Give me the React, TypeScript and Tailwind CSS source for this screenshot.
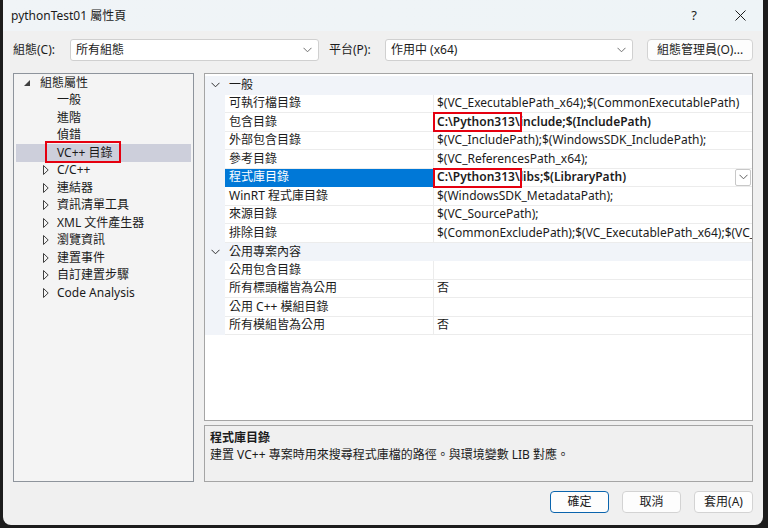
import { type ReactNode } from "react";

const FONT = "font-['Noto_Sans','Noto_Sans_CJK_TC',sans-serif]";

interface TreeItem {
  label: string;
  level: 0 | 1;
  kind: "expanded" | "collapsed" | "leaf";
  selected?: boolean;
}

const treeItems: TreeItem[] = [
  { label: "組態屬性", level: 0, kind: "expanded" },
  { label: "一般", level: 1, kind: "leaf" },
  { label: "進階", level: 1, kind: "leaf" },
  { label: "偵錯", level: 1, kind: "leaf" },
  { label: "VC++ 目錄", level: 1, kind: "leaf", selected: true },
  { label: "C/C++", level: 1, kind: "collapsed" },
  { label: "連結器", level: 1, kind: "collapsed" },
  { label: "資訊清單工具", level: 1, kind: "collapsed" },
  { label: "XML 文件產生器", level: 1, kind: "collapsed" },
  { label: "瀏覽資訊", level: 1, kind: "collapsed" },
  { label: "建置事件", level: 1, kind: "collapsed" },
  { label: "自訂建置步驟", level: 1, kind: "collapsed" },
  { label: "Code Analysis", level: 1, kind: "collapsed" }
];

interface GridRow {
  name?: string;
  value?: string;
  header?: string;
  bold?: boolean;
  marked?: boolean;
  selected?: boolean;
}

const gridRows: GridRow[] = [
  { header: "一般" },
  { name: "可執行檔目錄", value: "$(VC_ExecutablePath_x64);$(CommonExecutablePath)" },
  { name: "包含目錄", value: "C:\\Python313\\include;$(IncludePath)", bold: true, marked: true },
  { name: "外部包含目錄", value: "$(VC_IncludePath);$(WindowsSDK_IncludePath);" },
  { name: "參考目錄", value: "$(VC_ReferencesPath_x64);" },
  { name: "程式庫目錄", value: "C:\\Python313\\libs;$(LibraryPath)", bold: true, marked: true, selected: true },
  { name: "WinRT 程式庫目錄", value: "$(WindowsSDK_MetadataPath);" },
  { name: "來源目錄", value: "$(VC_SourcePath);" },
  { name: "排除目錄", value: "$(CommonExcludePath);$(VC_ExecutablePath_x64);$(VC_LibraryPath_x64)" },
  { header: "公用專案內容" },
  { name: "公用包含目錄", value: "" },
  { name: "所有標頭檔皆為公用", value: "否" },
  { name: "公用 C++ 模組目錄", value: "" },
  { name: "所有模組皆為公用", value: "否" }
];

function Chevron({ className }: { className?: string }) {
  return (
    <svg width="9" height="6" viewBox="0 0 9 6" className={className}>
      <path d="M0.5 0.8 L4.5 4.8 L8.5 0.8" fill="none" stroke="currentColor" strokeWidth="1" />
    </svg>
  );
}

function ComboBox({ text, width }: { text: string; width: string }) {
  return (
    <div className={`${width} h-[22px] shrink-0 flex items-center justify-between bg-white border border-[#d0d0d0] rounded-[3px] pl-[5px] pr-[6px]`}>
      <span>{text}</span>
      <Chevron className="text-[#707070]" />
    </div>
  );
}

function Button({ children, primary }: { children: ReactNode; primary?: boolean }) {
  return (
    <div className={`w-[59px] h-[22px] flex items-center justify-center rounded-[4px] bg-[#fdfdfd] border ${primary ? "border-[#0a64ad]" : "border-[#d3d3d3]"}`}>
      {children}
    </div>
  );
}

function TreeRow({ item }: { item: TreeItem }) {
  return (
    <div className={`relative h-[17.5px] flex items-center whitespace-nowrap ${item.selected ? "bg-[#cdcfdb]" : ""}`}>
      {item.level === 0 ? (
        <>
          <div className="w-[7px] shrink-0" />
          <svg width="8" height="8" viewBox="0 0 8 8" className="shrink-0">
            <polygon points="7,1 7,7 1,7" fill="#404040" />
          </svg>
          <span className="ml-[9px]">{item.label}</span>
        </>
      ) : (
        <>
          <div className="w-[27px] shrink-0" />
          <svg width="6" height="10" viewBox="0 0 6 10" className={`shrink-0 ${item.kind === "collapsed" ? "" : "invisible"}`}>
            <polygon points="0.5,0.5 5.2,5 0.5,9.5" fill="none" stroke="#404040" strokeWidth="1" />
          </svg>
          <span className="ml-[8px]">{item.label}</span>
        </>
      )}
      {item.selected && (
        <div className="absolute left-[29px] top-[-3px] w-[76px] h-[22px] border-2 border-[#e5000f]" />
      )}
    </div>
  );
}

function PropertyRow({ row }: { row: GridRow }) {
  if (row.header !== undefined) {
    return (
      <div className="h-[18.5px] flex items-center bg-[#f1f4f9]">
        <div className="w-[20px] flex justify-center">
          <Chevron className="text-[#303030]" />
        </div>
        <span className="ml-[4px]">{row.header}</span>
      </div>
    );
  }

  return (
    <div className="h-[18.5px] flex">
      <div className="w-[20px] shrink-0 bg-[#f1f4f9]" />
      <div className={`w-[209px] shrink-0 flex items-center pl-[4px] border-r border-b border-[#ececec] ${row.selected ? "bg-[#0078d7] text-white border-b-[#0078d7]" : ""}`}>
        {row.name}
      </div>
      <div className="relative flex-1 min-w-0 flex items-center justify-between pl-[3px] border-b border-[#ececec]">
        <span className={`whitespace-nowrap ${row.bold ? "font-semibold" : ""}`}>{row.value}</span>
        {row.selected && (
          <div className="w-[16px] h-[17px] mr-[1px] shrink-0 flex items-center justify-center bg-white border border-[#c8c8c8] rounded-[2px]">
            <Chevron className="text-[#606060]" />
          </div>
        )}
        {row.marked && (
          <div className="absolute left-[-1px] top-[-1px] w-[89px] h-[20px] border-2 border-[#e5000f]" />
        )}
      </div>
    </div>
  );
}

export default function App() {
  return (
    <div className={`w-[768px] h-[528px] bg-[#1c1c1c] pl-[3px] pr-[5px] pb-[3px] text-[12px] text-[#1b1b1b] ${FONT}`}>
      <div className="h-full flex flex-col bg-[#f0f0f0] rounded-b-[8px] overflow-hidden">
        <div className="h-[31px] shrink-0 flex items-center justify-between bg-gradient-to-r from-[#f0f4f7] to-[#eef4f7] pl-[8px]">
          <span>pythonTest01 屬性頁</span>
          <div className="flex items-center">
            <span className="w-[46px] text-center text-[13px]">?</span>
            <div className="w-[46px] flex justify-center">
              <svg width="11" height="11" viewBox="0 0 11 11">
                <path d="M0.5 0.5 L10.5 10.5 M10.5 0.5 L0.5 10.5" stroke="#1b1b1b" strokeWidth="1" />
              </svg>
            </div>
          </div>
        </div>

        <div className="flex-1 flex flex-col px-[10px] pt-[8px] pb-[12px]">
          <div className="h-[22px] flex items-center whitespace-nowrap">
            <span className="w-[57px] shrink-0">組態(C):</span>
            <ComboBox text="所有組態" width="w-[249px]" />
            <span className="w-[56px] shrink-0 ml-[10px]">平台(P):</span>
            <ComboBox text="作用中 (x64)" width="w-[248px]" />
            <div className="ml-[14px] w-[106px] h-[22px] shrink-0 flex items-center justify-center bg-[#fdfdfd] border border-[#d3d3d3] rounded-[4px]">
              組態管理員(O)...
            </div>
          </div>

          <div className="mt-[12px] h-[409px] flex gap-[10px]">
            <div className="w-[181px] shrink-0 border border-[#8e949c] bg-[#f4f4f4] px-[2px]">
              {treeItems.map(item => <TreeRow key={item.label} item={item} />)}
            </div>
            <div className="flex-1 min-w-0 flex flex-col">
              <div className="flex-1 border border-[#a5a5a5] bg-white pt-[2px] overflow-hidden">
                {gridRows.map((row, index) => <PropertyRow key={index} row={row} />)}
              </div>
              <div className="mt-[4px] h-[57px] border border-[#a5a5a5] bg-[#f0f0f0] px-[5px] pt-[3px] leading-[17px]">
                <p className="font-semibold">程式庫目錄</p>
                <p>建置 VC++ 專案時用來搜尋程式庫檔的路徑。與環境變數 LIB 對應。</p>
              </div>
            </div>
          </div>

          <div className="mt-[9px] flex justify-end gap-[13px]">
            <Button primary>確定</Button>
            <Button>取消</Button>
            <Button>套用(A)</Button>
          </div>
        </div>
      </div>
    </div>
  );
}
